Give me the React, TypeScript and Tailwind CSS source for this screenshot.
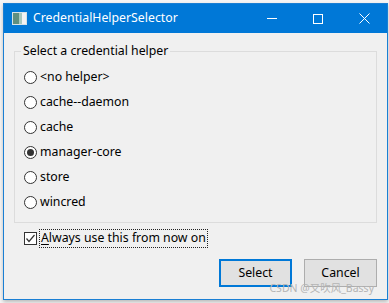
import React, { useState } from 'react'

const helpers = ['<no helper>', 'cache--daemon', 'cache', 'manager-core', 'store', 'wincred']

function Radio({ checked }: { checked: boolean }) {
  return (
    <span className="w-[13px] h-[13px] rounded-full border border-[#333333] bg-white flex items-center justify-center shrink-0">
      {checked && <span className="w-[7px] h-[7px] rounded-full bg-[#333333]" />}
    </span>
  )
}

export default function App() {
  const [selected, setSelected] = useState('manager-core')
  const [always, setAlways] = useState(true)

  return (
    <div
      className="w-[389px] h-[303px] bg-[#f6f6f6] pt-[3px] pl-[3px] overflow-hidden"
      style={{ fontFamily: '"Noto Sans", "Noto Sans CJK SC", sans-serif' }}
    >
      <div className="w-[385px] h-[297px] border border-[#1a7fd4] bg-[#f0f0f0] flex flex-col shadow-[0_2px_4px_rgba(0,0,0,0.25)]">
        {/* title bar */}
        <div className="h-[29px] bg-[#0078d7] flex items-center text-white shrink-0">
          <svg width="15" height="13" viewBox="0 0 15 13" className="ml-[8px]">
            <rect x="0" y="0" width="15" height="13" fill="#d8e2e6" />
            <rect x="1" y="1" width="6" height="11" fill="#5f8f80" />
            <rect x="7" y="1" width="3" height="11" fill="#a9c9bf" />
            <rect x="10" y="1" width="4" height="11" fill="#f3f3f3" />
          </svg>
          <span className="ml-[6px] text-[12.3px] leading-none">CredentialHelperSelector</span>
          <div className="ml-auto flex items-center h-full">
            <div className="w-[46px] h-full flex items-center justify-center">
              <span className="w-[10px] h-px bg-white" />
            </div>
            <div className="w-[46px] h-full flex items-center justify-center">
              <span className="w-[10px] h-[10px] border border-white" />
            </div>
            <div className="w-[46px] h-full flex items-center justify-center">
              <svg width="11" height="11" viewBox="0 0 11 11">
                <path d="M0.5 0.5 L10.5 10.5 M10.5 0.5 L0.5 10.5" stroke="white" strokeWidth="1" />
              </svg>
            </div>
          </div>
        </div>

        {/* client area */}
        <div className="flex flex-col text-[12.3px] text-black px-[10px]">
          <div className="relative mt-[18px] h-[172px] border border-[#dcdcdc] pt-[13px] pl-[9px]">
            <span className="absolute -top-[9px] left-[6px] px-[2px] bg-[#f0f0f0] leading-[16px]">
              Select a credential helper
            </span>
            {helpers.map((h) => (
              <div
                key={h}
                className="h-[25px] flex items-center gap-[3px] cursor-default"
                onClick={() => setSelected(h)}
              >
                <Radio checked={selected === h} />
                <span className="leading-none">{h}</span>
              </div>
            ))}
          </div>

          <div className="mt-[5px] h-[20px] flex items-center ml-[10px] gap-[2px]" onClick={() => setAlways(!always)}>
            <span className="w-[13px] h-[13px] border border-[#333333] bg-white flex items-center justify-center shrink-0">
              {always && (
                <svg width="11" height="11" viewBox="0 0 11 11">
                  <path d="M1.5 5.5 L4 8.5 L9.5 2" stroke="#333333" strokeWidth="1.2" fill="none" />
                </svg>
              )}
            </span>
            <span className="border border-dotted border-[#222222] px-px h-[19px] flex items-center leading-none">
              <span className="underline underline-offset-2">A</span>lways use this from now on
            </span>
          </div>

          <div className="mt-[11px] flex justify-end gap-[12px] relative">
            <button className="w-[73px] h-[28px] border-2 border-[#0078d7] bg-[#e1e1e1] text-[12.3px]">Select</button>
            <button className="w-[73px] h-[28px] border border-[#adadad] bg-[#e1e1e1] text-[12.3px]">Cancel</button>
            <span className="absolute right-[3px] top-[24px] text-[10.5px] leading-none text-[#b4b4b4]">
              CSDN @又吹风_Bassy
            </span>
          </div>
        </div>
      </div>
    </div>
  )
}
